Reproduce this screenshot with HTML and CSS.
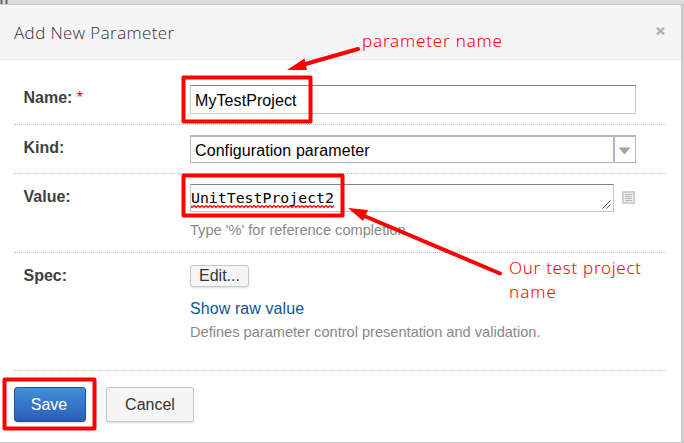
FILE: index.html
```html
<!DOCTYPE html>
<html lang="en">
<head>
<meta charset="utf-8">
<title>Add New Parameter</title>
<link rel="stylesheet" href="styles.css">
</head>
<body>
<div class="backdrop"><svg width="9" height="4"><path d="M1.500 0v4M6.500 0v4"/></svg></div>
<main class="dialog">
  <header class="header">
    <h1>Add New Parameter</h1>
    <svg class="close" width="9" height="8" viewBox="0 0 9 8"><path d="M1 .8 8 7.2M8 .8 1 7.2"/></svg>
  </header>
  <form class="form">
    <div class="row name">
      <label>Name: <span class="required">*</span></label>
      <div class="field"><div class="input"><span class="t-name">MyTestProject</span></div></div>
    </div>
    <div class="row kind">
      <label>Kind:</label>
      <div class="field"><div class="select"><span class="t-kind">Configuration parameter</span><span class="toggle"><svg width="13" height="8" viewBox="0 0 13 8"><path d="M.5.5h12l-6 7z"/></svg></span></div></div>
    </div>
    <div class="row value">
      <label>Value:</label>
      <div class="field">
        <div class="line">
          <div class="textarea"><span class="mono">UnitTestProject2</span><svg class="squiggle" width="143" height="4"><defs><pattern id="wave" width="4" height="4" patternUnits="userSpaceOnUse"><path d="M-1 0 1 2.500 3 .5 5 2.500"/></pattern></defs><rect width="143" height="4" fill="url(#wave)"/></svg><svg class="grip" width="9" height="9"><path d="M.5 8.500l8-8M4.500 8.500l4-4"/></svg></div>
          <svg class="list" width="13" height="13"><rect class="frame" x="1" y="1" width="11" height="11"/><path d="M3 3.500h7M3 5.500h7M3 7.500h7M3 9.500h7"/></svg>
        </div>
        <p class="hint t-type">Type '%' for reference completion</p>
      </div>
    </div>
    <div class="row spec">
      <label>Spec:</label>
      <div class="field">
        <button type="button" class="btn edit">Edit...</button>
        <a class="raw">Show raw value</a>
        <p class="hint t-def">Defines parameter control presentation and validation.</p>
      </div>
    </div>
    <div class="actions">
      <button type="button" class="btn save">Save</button>
      <button type="button" class="btn cancel">Cancel</button>
    </div>
  </form>
</main>
<svg class="notes" width="684" height="443" viewBox="0 0 684 443">
  <g class="boxes">
    <rect x="183.5" y="77.5" width="127" height="44"/>
    <rect x="183.5" y="175.5" width="159" height="40"/>
    <rect x="4.5" y="379.5" width="90" height="49"/>
  </g>
  <path class="shaft" d="M358 49 302 65M500 273.5 362 215"/>
  <path class="head" d="M287 70 304.500 58.500 307 70zM348 208 368 210 363 221z"/>
  <text x="362" y="47" textLength="140">parameter name</text>
  <text x="509" y="274" textLength="132">Our test project</text>
  <text x="509" y="298" textLength="47">name</text>
</svg>
</body>
</html>
```
FILE: styles.css
```css
* { box-sizing: border-box; }
body {
  margin: 0;
  width: 684px;
  height: 443px;
  overflow: hidden;
  background: #cdcdcd;
  font-family: "Liberation Sans", Arial, sans-serif;
  font-size: 16px;
  color: #000;
}
.backdrop { height: 4px; background: #dcdcdc; overflow: hidden; }
.backdrop svg { display: block; fill: none; stroke: #6d6258; stroke-width: 2; }
.dialog {
  width: 682px;
  height: 439px;
  border: solid #c8c8c8;
  border-width: 1px 1px 1px 0;
  background: #fff;
}
.header {
  display: flex;
  justify-content: space-between;
  height: 55px;
  padding: 0 16px 0 14px;
  border-bottom: 1px solid #e8e8e8;
  background: #f5f5f5;
}
h1 {
  margin: 15px 0 0;
  font: 350 17px/26px "Open Sans", sans-serif;
  letter-spacing: 0.4px;
  color: #333;
  white-space: nowrap;
}
.close { margin-top: 22px; fill: none; stroke: #b1b1b1; stroke-width: 2.4; }
.form { padding: 15px 15px 0 14px; }
.row {
  display: flex;
  border-bottom: 1px dotted #c0c0c0;
}
.row label { width: 176px; padding-left: 9.500px; font-weight: bold; line-height: 20px; color: #3f3f3f; }
.required { font-size: 16px; font-weight: normal; color: #e00; }
.field { width: 446px; }
.name { height: 50px; padding-top: 10px; }
.name label { padding-top: 3px; }
.kind { height: 49px; padding-top: 11px; }
.kind label { padding-top: 2px; }
.value { height: 79px; padding-top: 10px; }
.value label { padding-top: 3px; }
.spec { height: 118px; padding-top: 12px; }
.spec label { padding-top: 1px; }
.input {
  height: 29px;
  padding-left: 4px;
  border: 1px solid #c8c8c8;
  border-top-color: #848484;
  line-height: 29px;
  letter-spacing: 0.08px;
}
.select {
  display: flex;
  justify-content: space-between;
  height: 28px;
  margin-top: -1px;
  padding-left: 4px;
  border: 1px solid #b3b5cb;
  border-top-width: 2px;
  line-height: 28px;
  letter-spacing: 0.09px;
}
.toggle { display: flex; width: 22px; border-left: 2px solid #b3b5cb; align-items: center; justify-content: center; }
.toggle svg { fill: #a2a2a2; margin-top: 3px; margin-right: 1px; }
.line { display: flex; align-items: center; gap: 8px; }
.textarea {
  position: relative;
  width: 424px;
  height: 28px;
  border: 1px solid #c8c8c8;
  border-top-color: #848484;
}
.mono { font: 14.85px/27px "DejaVu Sans Mono", monospace; display: block; }
.squiggle { position: absolute; left: 0; top: 20px; }
.squiggle path { fill: none; stroke: #f00; stroke-width: 1.2; }
.grip { position: absolute; right: 2px; bottom: 2px; fill: none; stroke: #555; stroke-width: 1; }
.list { margin-top: -2px; }
.list path, .frame { fill: none; stroke: #b5b5b5; }
.list .frame { fill: #eee; stroke: #d0d0d0; stroke-width: 2; }
.hint { margin: 0; font-size: 14.6px; line-height: 18px; color: #888; white-space: nowrap; }
.t-type { margin-top: 9px; }
.btn {
  display: block;
  margin: 0;
  padding: 0;
  border: 1px solid #c8c8c8;
  border-radius: 3px;
  background: #f5f5f5;
  box-shadow: 0 1px 2px #0002;
  font: 16px "Liberation Sans", Arial, sans-serif;
  color: #333;
}
.edit { width: 59px; height: 22px; line-height: 20px; }
.raw { display: block; margin-top: 11px; line-height: 22px; color: #105596; letter-spacing: 0.09px; }
.t-def { margin-top: 3px; }
.actions { display: flex; gap: 20px; padding-top: 16px; }
.actions .btn { height: 35px; }
.actions .save { width: 72px; padding-right: 2px; color: #fff; border-color: #20559f; background: linear-gradient(#4190db, #2b5db5); }
.cancel { width: 88px; }
.notes { position: absolute; left: 0; top: 0; }
.boxes { fill: none; stroke: #f00; stroke-width: 4; stroke-linejoin: round; }
.shaft { fill: none; stroke: #f00; stroke-width: 4; stroke-linecap: round; }
.head { fill: #f00; }
.notes text { fill: #f00; font: 350 17px "Noto Sans", "Open Sans", sans-serif; }
```
